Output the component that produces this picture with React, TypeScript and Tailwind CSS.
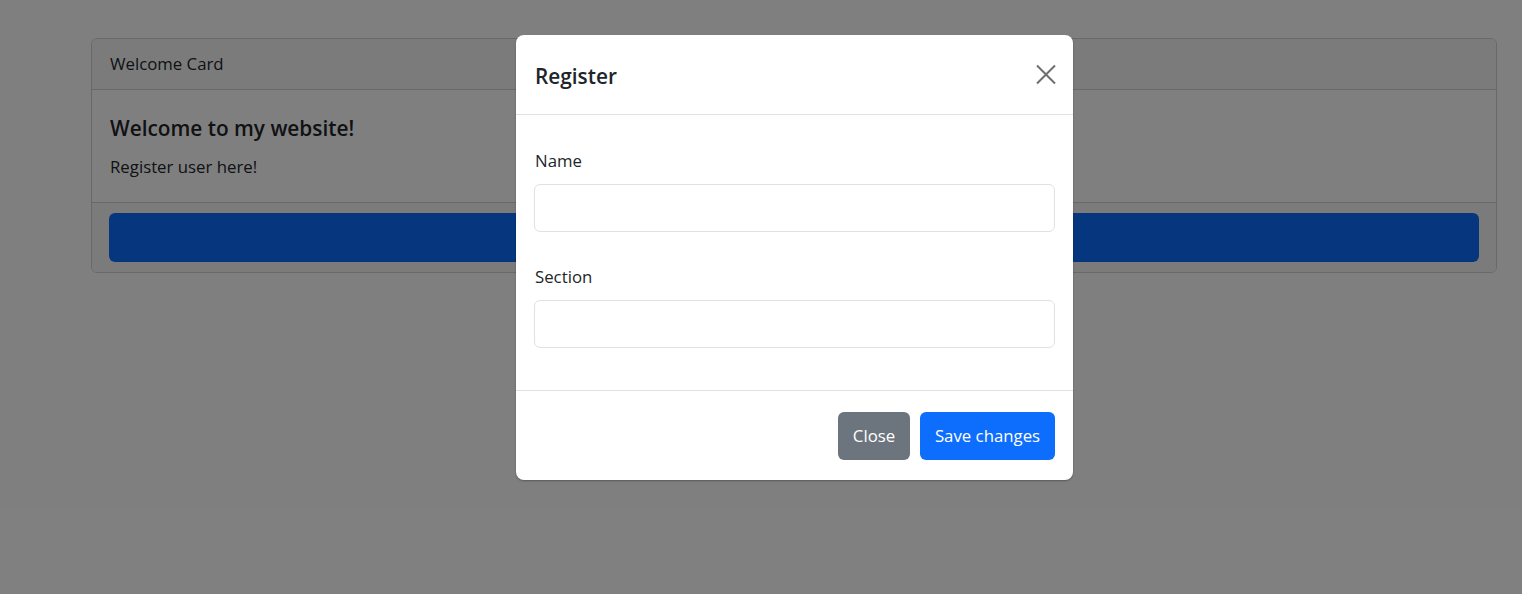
import React from 'react'

const font = { fontFamily: '"Open Sans", "Noto Sans", sans-serif' }

function CloseIcon() {
  return (
    <svg width="20" height="21" viewBox="0 0 20 21" fill="none" stroke="#6f6f6f" strokeWidth="2">
      <path d="M1 1.5 L19 19.5 M19 1.5 L1 19.5" />
    </svg>
  )
}

export default function App() {
  return (
    <div className="relative h-[594px] w-full overflow-hidden bg-white text-[#212529]" style={font}>
      {/* page content under the backdrop */}
      <div className="pt-[38px] pl-[91px] pr-[25px]">
        <div className="rounded-[6px] border border-[#d2d2d2] overflow-hidden">
          <div className="h-[51px] flex items-center px-[18px] bg-[#f7f7f7] border-b border-[#d2d2d2] text-[16.8px]">
            Welcome Card
          </div>
          <div className="h-[112px] px-[18px] pt-[22px]">
            <h5 className="text-[20.8px] font-semibold leading-[32px]">Welcome to my website!</h5>
            <p className="mt-[11px] text-[16.8px] leading-[24px]">Register user here!</p>
          </div>
          <div className="h-[70px] px-[17px] pt-[10px] bg-[#f7f7f7] border-t border-[#d2d2d2]">
            <div className="h-[49px] w-full rounded-[6px] bg-[#0d6efd]" />
          </div>
        </div>
      </div>

      {/* backdrop + modal */}
      <div className="absolute inset-0 bg-black/50">
        <div className="ml-[516px] mt-[35px] w-[557px] rounded-[8px] bg-white shadow-[0_1px_2px_rgba(0,0,0,0.3)]">
          <div className="h-[80px] flex items-center justify-between pl-[19px] pr-[17px] border-b border-[#dee2e6]">
            <h5 className="pt-[4px] text-[20.8px] font-semibold">Register</h5>
            <CloseIcon />
          </div>
          <div className="h-[276px] px-[18px] pt-[34px] border-b border-[#dee2e6]">
            <label className="block text-[16.8px] leading-[24px] pl-[1px]">Name</label>
            <input className="mt-[11px] block h-[48px] w-full rounded-[6px] border border-[#dee2e6] px-3 outline-none" />
            <label className="mt-[33px] block text-[16.8px] leading-[24px] pl-[1px]">Section</label>
            <input className="mt-[11px] block h-[48px] w-full rounded-[6px] border border-[#dee2e6] px-3 outline-none" />
          </div>
          <div className="h-[89px] flex items-start justify-end gap-[10px] pt-[21px] pr-[18px]">
            <button className="h-[48px] w-[72px] rounded-[6px] bg-[#6c757d] text-white text-[16.8px]">Close</button>
            <button className="h-[48px] w-[135px] rounded-[6px] bg-[#0d6efd] text-white text-[16.8px]">Save changes</button>
          </div>
        </div>
      </div>
    </div>
  )
}
